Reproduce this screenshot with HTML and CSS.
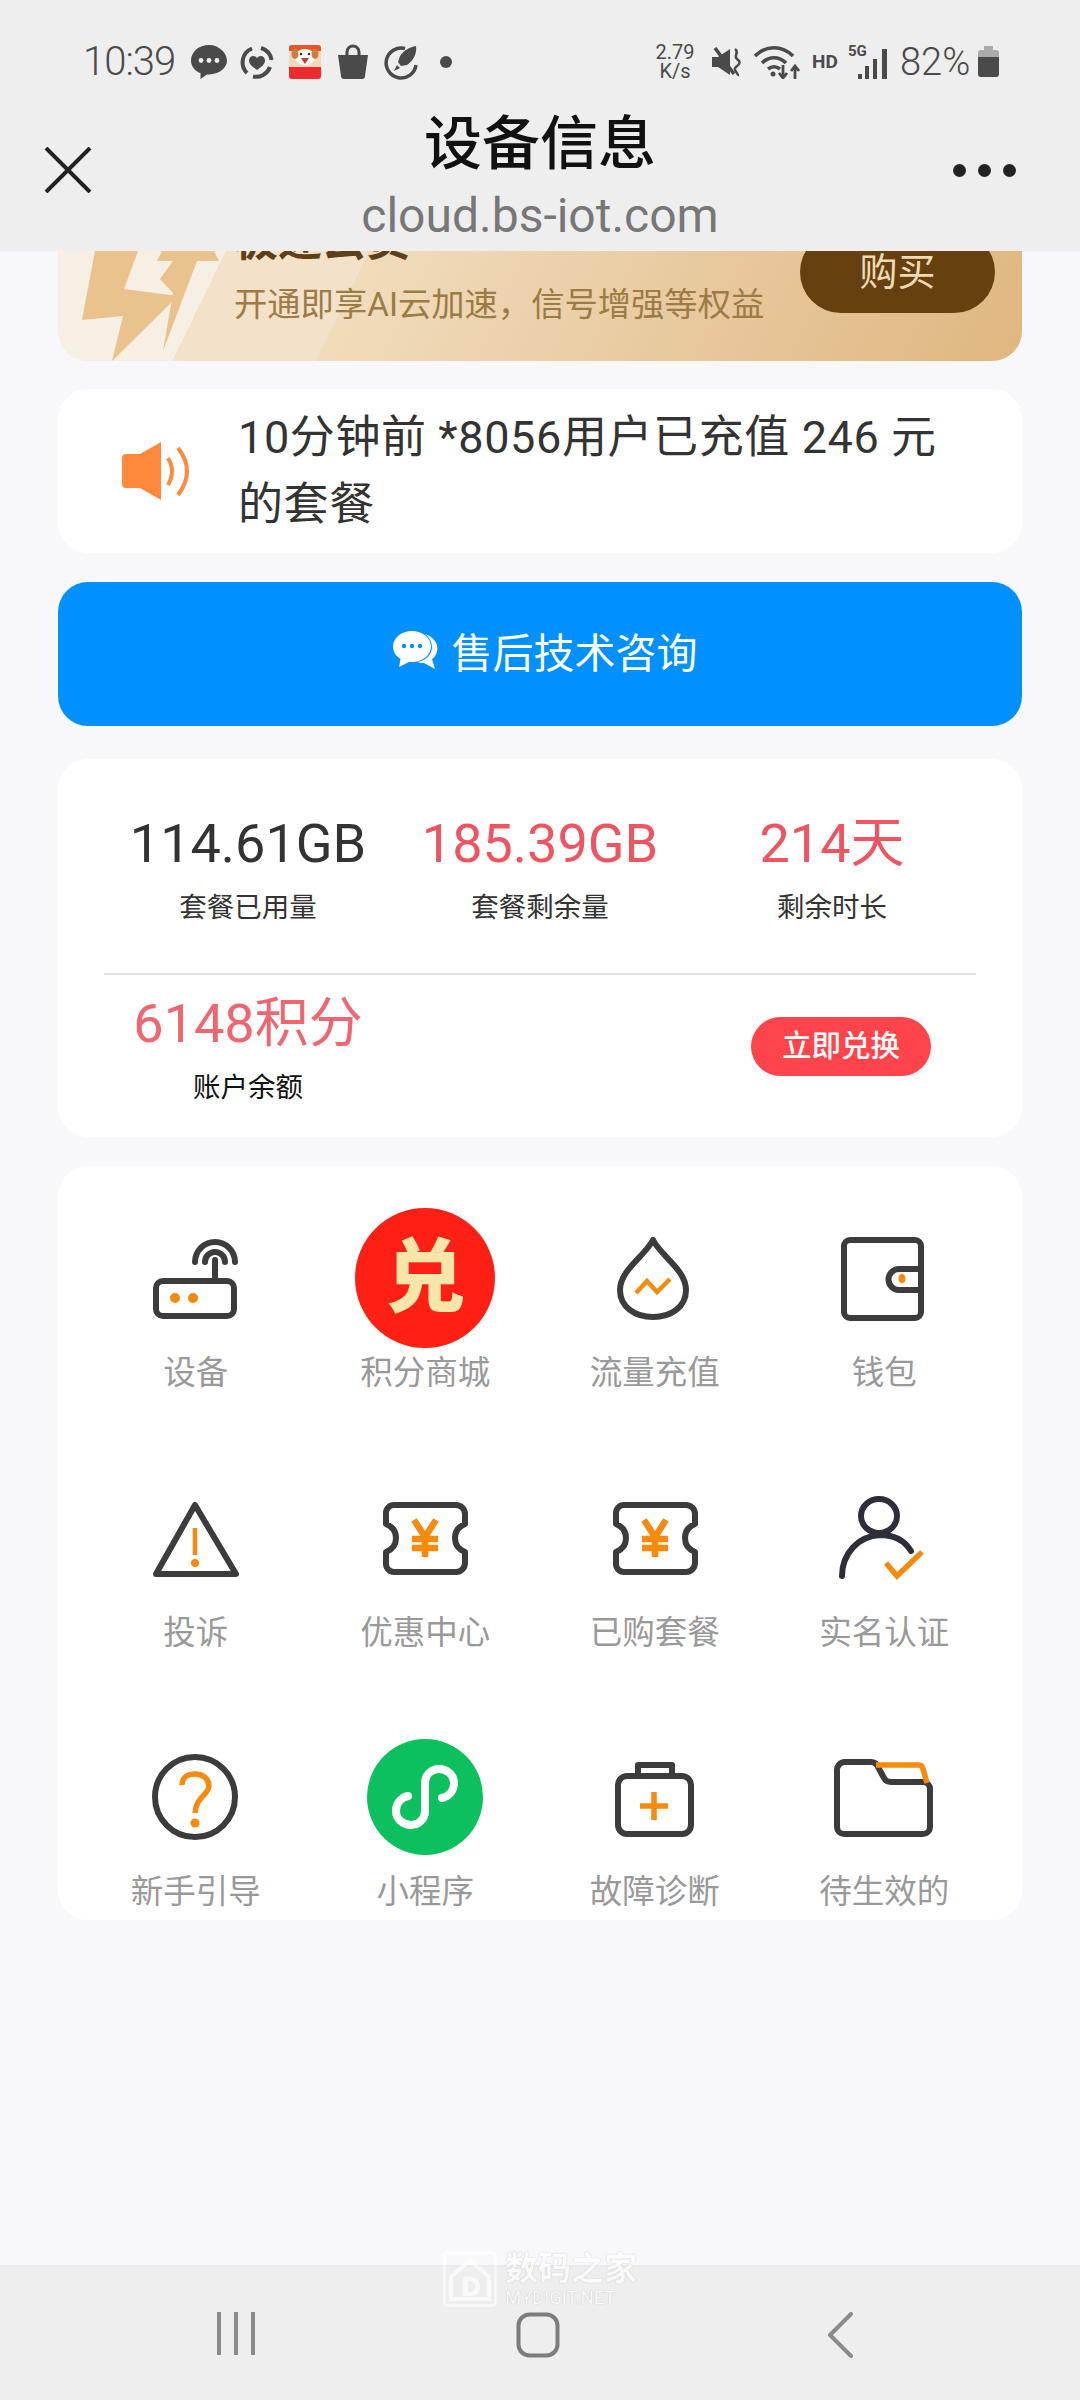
FILE: index.html
```html
<!DOCTYPE html>
<html lang="zh-CN">
<head>
    <meta charset="UTF-8">
    <meta name="viewport" content="width=device-width, initial-scale=1.0">
    <title>设备信息</title>
    <link rel="stylesheet" href="styles.css">
</head>
<body>
<div class="page">
    <header class="top">
        <div class="status">
            <div class="status-left">
                <span class="time">10:39</span>
                <svg class="st-icon" viewBox="0 0 34 34"><path fill="#4a4a4a" d="M17 0C7 0-1 6.800-1 15.500c0 5.600 3.700 10.400 9.500 12.800V34l6.500-4.600h2c10 0 18-6.400 18-13.900S27 0 17 0z"/><circle cx="9" cy="15.500" r="2.400" fill="#eee"/><circle cx="17" cy="15.500" r="2.400" fill="#eee"/><circle cx="25" cy="15.500" r="2.400" fill="#eee"/></svg>
                <svg class="st-icon" viewBox="0 0 34 34"><path fill="none" stroke="#4a4a4a" stroke-width="4" d="M12 3.500A15 15 0 0 0 7 28M13 31.500A15 15 0 0 0 30 22M31.500 15A15 15 0 0 0 21 3"/><path fill="#4a4a4a" d="M17 25c-4-3-8-5.500-8-9.500 0-2.500 2-4.500 4.300-4.500 1.500 0 2.900.8 3.700 2.200.8-1.400 2.200-2.200 3.700-2.200 2.300 0 4.300 2 4.300 4.500 0 4-4 6.500-8 9.500z"/></svg>
                <svg class="st-icon" viewBox="0 0 34 34"><rect x="1" width="32" height="34" rx="3" fill="#f0d9b8"/><path d="M1 3a3 3 0 0 1 3-3h26a3 3 0 0 1 3 3v3H1z" fill="#e8552c"/><path d="M1 22h32v9a3 3 0 0 1-3 3H4a3 3 0 0 1-3-3z" fill="#ee2a2e"/><ellipse cx="17" cy="12" rx="10" ry="8" fill="#fff"/><ellipse cx="7" cy="9" rx="3.500" ry="5" fill="#c9803c"/><ellipse cx="27" cy="9" rx="3.500" ry="5" fill="#c9803c"/><path d="M13 13h8l-4 6z" fill="#c6393a"/><circle cx="13" cy="9" r="1.300" fill="#333"/><circle cx="21" cy="9" r="1.300" fill="#333"/></svg>
                <svg class="st-icon" viewBox="0 0 34 34"><path fill="none" stroke="#4a4a4a" stroke-width="3" d="M11 10V7a6 6 0 0 1 12 0v3"/><path fill="#4a4a4a" d="M2 10h30l-3 21a3 3 0 0 1-3 3H8a3 3 0 0 1-3-3z"/></svg>
                <svg class="st-icon" viewBox="0 0 34 34"><path fill="none" stroke="#4a4a4a" stroke-width="3.500" d="M21 3.500A15 15 0 1 0 32 20"/><path fill="#4a4a4a" d="M32 1c1 7-2 14-9 19l-6 1-3-4 2-6C20 5 26 2 32 1zM13 20l3 3-6 3z"/></svg>
                <span class="st-dot"></span>
            </div>
            <div class="status-right">
                <span class="speed">2.79<br>K/s</span>
                <svg class="mute" viewBox="0 0 30 30"><path fill="#4a4a4a" d="M0 10h6l12-8v26l-12-8H0z"/><path stroke="#4a4a4a" stroke-width="3.500" d="M3 1l19 26"/><path fill="none" stroke="#4a4a4a" stroke-width="2.500" d="M23 2c5 3-2 7 2 10s3 5-1 8 3 6 2 9"/></svg>
                <svg class="wifi" viewBox="0 0 46 34"><path fill="none" stroke="#4a4a4a" stroke-width="3.500" d="M1 11c11-11 27-11 38 0M8 18c7-7 17-7 24 0M14 24c4-3 8-3 12 0"/><circle cx="19" cy="29" r="2.500" fill="#4a4a4a"/><path fill="none" stroke="#4a4a4a" stroke-width="2.800" d="M29 20v13M25 28l4 5 4-5M41 34V22M37 26l4-5 4 5"/></svg>
                <span class="hd">HD</span>
                <div class="signal">
                    <span class="five-g">5G</span>
                    <svg class="bars" viewBox="0 0 30 30"><rect x="0" y="25" width="4" height="5" fill="#4a4a4a"/><rect x="7" y="17" width="4" height="13" fill="#4a4a4a"/><rect x="15" y="10" width="4" height="20" fill="#4a4a4a"/><rect x="24" y="0" width="5" height="30" fill="#4a4a4a"/></svg>
                </div>
                <span class="batt-text">82%</span>
                <svg class="batt" viewBox="0 0 21 31"><path fill="#ababab" d="M6 0h9v4h3a3 3 0 0 1 3 3v5H0V7a3 3 0 0 1 3-3h3z"/><path fill="#4a4a4a" d="M0 11h21v17a3 3 0 0 1-3 3H3a3 3 0 0 1-3-3z"/></svg>
            </div>
        </div>
        <div class="bar">
            <svg class="close" viewBox="0 0 48 46"><path fill="none" stroke="#222" stroke-width="4" d="M2 1l44 44M46 1L2 45"/></svg>
            <div class="titles">
                <div class="title">设备信息</div>
                <div class="url">cloud.bs-iot.com</div>
            </div>
            <div class="more"><i></i><i></i><i></i></div>
        </div>
    </header>

    <main class="content">
        <section class="banner">
            <svg class="bolt" viewBox="0 0 170 110"><path fill="#e9c28d" d="M37 0h43L66 38l54 7-66 65 11-45-41 4z"/><path fill="#e9c28d" d="M104 0h52l5 10h-22l-34 90 10-58-13-14 13-18h-16z"/></svg>
            <div class="banner-text">
                <div class="banner-name">极速云贡</div>
                <div class="banner-desc">开通即享AI云加速，信号增强等权益</div>
            </div>
            <div class="buy">购买</div>
        </section>

        <section class="notice">
            <svg class="horn" viewBox="0 0 70 58"><path fill="#ff8a3d" d="M4 12h14L39 0v58L18 46H4q-4 0-4-4V16q0-4 4-4z"/><path fill="none" stroke="#ff8a3d" stroke-width="4" d="M46 16q8 13 0 27M56 6q18 23 0 47"/></svg>
            <p class="notice-text">10分钟前 *8056用户已充值 246 元 的套餐</p>
        </section>

        <a class="support">
            <svg class="support-icon" viewBox="0 0 46 38"><path fill="#fff" d="M32 3c9 3 14 10 12 18-1 3-3 6-5 7l3 10-11-6c-2 0-5 0-7-1 8-1 15-7 15-15 0-5-3-10-7-13z"/><path fill="#fff" d="M19 0C8.500 0 0 6.800 0 15.500 0 21 3 25 7.500 27.800L6 36l10-5h3c10.500 0 19-7 19-15.500S29.500 0 19 0z"/><circle cx="11" cy="15" r="2.200" fill="#0090ff"/><circle cx="19" cy="15" r="2.200" fill="#0090ff"/><circle cx="27" cy="15" r="2.200" fill="#0090ff"/></svg>
            <span>售后技术咨询</span>
        </a>

        <section class="stats">
            <div class="stats-row">
                <div class="stat">
                    <div class="stat-num">114.61GB</div>
                    <div class="stat-label">套餐已用量</div>
                </div>
                <div class="stat">
                    <div class="stat-num red">185.39GB</div>
                    <div class="stat-label">套餐剩余量</div>
                </div>
                <div class="stat">
                    <div class="stat-num red">214天</div>
                    <div class="stat-label">剩余时长</div>
                </div>
            </div>
            <div class="stats-line"></div>
            <div class="points">
                <div class="stat">
                    <div class="stat-num points-num">6148积分</div>
                    <div class="stat-label dark">账户余额</div>
                </div>
                <div class="exchange">立即兑换</div>
            </div>
        </section>

        <section class="menu">
            <div class="menu-item">
                <div class="menu-icon">
                    <svg class="ico" viewBox="0 0 100 100"><g class="line"><rect x="10" y="53" width="78" height="35" rx="7"/><path d="M69 53V32M49 34a20 20 0 0 1 40 0M59 34a10 10 0 0 1 20 0"/></g><circle class="dot" cx="29" cy="70" r="5"/><circle class="dot" cx="47" cy="70" r="5"/></svg>
                </div>
                <span class="menu-label">设备</span>
            </div>
            <div class="menu-item">
                <div class="menu-icon"><div class="exchange-badge">兑</div></div>
                <span class="menu-label">积分商城</span>
            </div>
            <div class="menu-item">
                <div class="menu-icon">
                    <svg class="ico" viewBox="0 0 100 100"><path class="line" d="M48 12C56 28 81 42 81 62 81 79 66 89 48 89 30 89 15 79 15 62 15 42 40 28 48 12z"/><path class="accent thin" d="M31 65l11-12 10 11 13-13"/></svg>
                </div>
                <span class="menu-label">流量充值</span>
            </div>
            <div class="menu-item">
                <div class="menu-icon">
                    <svg class="ico" viewBox="0 0 100 100"><g class="line"><rect x="10" y="12" width="77" height="78" rx="6"/><path d="M87 41H65a10.500 10.500 0 0 0 0 21h22"/></g><ellipse class="dot" cx="68" cy="50.500" rx="3.500" ry="4.500"/></svg>
                </div>
                <span class="menu-label">钱包</span>
            </div>

            <div class="menu-item">
                <div class="menu-icon">
                    <svg class="ico" viewBox="0 0 100 100"><path class="line" d="M49 17L90 86H10z"/><path class="accent thin" d="M49 40v27"/><circle class="dot" cx="49" cy="75" r="4"/></svg>
                </div>
                <span class="menu-label">投诉</span>
            </div>
            <div class="menu-item">
                <div class="menu-icon">
                    <svg class="ico" viewBox="0 0 100 100"><path class="line" d="M19 17h62a9 9 0 0 1 9 9v10q-10 4-10 14t10 14v11a9 9 0 0 1-9 9H19a8 8 0 0 1-8-8V64q10-4 10-14T11 36V25a8 8 0 0 1 8-8z"/><path class="accent yen" d="M39 32l11 17 11-17M50 49v20M37 51h26M37 60h26"/></svg>
                </div>
                <span class="menu-label">优惠中心</span>
            </div>
            <div class="menu-item">
                <div class="menu-icon">
                    <svg class="ico" viewBox="0 0 100 100"><path class="line" d="M19 17h62a9 9 0 0 1 9 9v10q-10 4-10 14t10 14v11a9 9 0 0 1-9 9H19a8 8 0 0 1-8-8V64q10-4 10-14T11 36V25a8 8 0 0 1 8-8z"/><path class="accent yen" d="M39 32l11 17 11-17M50 49v20M37 51h26M37 60h26"/></svg>
                </div>
                <span class="menu-label">已购套餐</span>
            </div>
            <div class="menu-item">
                <div class="menu-icon">
                    <svg class="ico" viewBox="0 0 100 100"><g class="line navy"><ellipse cx="45" cy="28" rx="18" ry="17"/><path d="M8 88C8 66 24 48 46 47c14 0 25 6 31 16"/></g><path class="accent" d="M52 75l11 13 25-24"/></svg>
                </div>
                <span class="menu-label">实名认证</span>
            </div>

            <div class="menu-item">
                <div class="menu-icon">
                    <svg class="ico" viewBox="0 0 100 100"><circle class="line" cx="49" cy="50" r="40"/><path class="accent" d="M36 38c0-8 6-11 13-11 8 0 14 5 14 12 0 8-13 11-14 27"/><circle class="dot" cx="49" cy="76" r="4.500"/></svg>
                </div>
                <span class="menu-label">新手引导</span>
            </div>
            <div class="menu-item">
                <div class="menu-icon">
                    <svg class="mini" viewBox="0 0 116 116"><circle cx="58" cy="58" r="58" fill="#0cbf5f"/><path fill="none" stroke="#fff" stroke-width="8" stroke-linecap="round" d="M41 57c-8 2-12 8-12 15 0 8 7 14 15 14s14-6 14-14V44c0-8 6-14 14-14s15 6 15 14c0 7-4 13-12 15"/></svg>
                </div>
                <span class="menu-label">小程序</span>
            </div>
            <div class="menu-item">
                <div class="menu-icon">
                    <svg class="ico" viewBox="0 0 100 100"><g class="line"><rect x="13" y="29" width="73" height="58" rx="9"/><path d="M33 29V18h34v11"/></g><path class="accent" d="M35 59h28M49 45v28"/></svg>
                </div>
                <span class="menu-label">故障诊断</span>
            </div>
            <div class="menu-item">
                <div class="menu-icon">
                    <svg class="ico" viewBox="0 0 100 100"><path class="line" d="M3 24a8 8 0 0 1 8-9h26q5 0 7 5l6 11q2 4 7 4h33a7 7 0 0 1 6 7v38a7 7 0 0 1-7 7H10a7 7 0 0 1-7-7z"/><path class="accent" d="M42 18h43q3 0 4 4l4 14"/></svg>
                </div>
                <span class="menu-label">待生效的</span>
            </div>
        </section>
    </main>

    <footer class="nav">
        <svg class="nav-bars" viewBox="0 0 40 44"><path fill="none" stroke="#8a8a8a" stroke-width="4" d="M3 0v43M20 0v43M37 0v43"/></svg>
        <svg class="nav-home" viewBox="0 0 44 46"><rect x="2.500" y="2.500" width="39" height="41" rx="11" fill="none" stroke="#7c7c7c" stroke-width="4"/></svg>
        <svg class="nav-back" viewBox="0 0 26 46"><path fill="none" stroke="#8a8a8a" stroke-width="4" stroke-linecap="round" stroke-linejoin="round" d="M24 2L3 23l21 21"/></svg>
    </footer>

    <div class="watermark">
        <svg class="wm-logo" viewBox="0 0 54 56"><rect x="1.500" y="1.500" width="51" height="53" rx="3" fill="none" stroke="#fff" stroke-width="2.500"/><path fill="none" stroke="#fff" stroke-width="4" d="M8 26L27 9l19 17v22H8z"/><path fill="#fff" d="M20 26h7c7 0 10 4 10 10s-3 9-10 9h-7zm5 4v11h2c4 0 5-2 5-5s-1-6-5-6z"/></svg>
        <div class="wm-text">
            <div class="wm-name">数码之家</div>
            <div class="wm-site">MYDIGIT.NET</div>
        </div>
    </div>
</div>
</body>
</html>
```

FILE: styles.css
```css
* {
    box-sizing: border-box;
}
body {
    margin: 0;
    font-family: Roboto, "Noto Sans CJK SC", sans-serif;
    background-color: #f8f8fc;
    color: #333;
}
.page {
    position: relative;
    width: 1080px;
    height: 2400px;
    display: flex;
    flex-direction: column;
    overflow: hidden;
}

/* top bar */
.top {
    position: relative;
    z-index: 1;
    height: 251px;
    background-color: #eeeeee;
    padding-top: 44px;
    flex-shrink: 0;
}
.status {
    display: flex;
    justify-content: space-between;
    align-items: center;
    height: 35px;
    padding: 0 81px 0 83px;
    color: #4a4a4a;
}
.status-left, .status-right {
    display: flex;
    align-items: center;
}
.status-left {
    gap: 14px;
}
.status-right {
    gap: 12px;
}
.time {
    font-size: 40px;
    font-weight: 300;
    letter-spacing: -1px;
    width: 95px;
}
.st-icon {
    width: 34px;
    height: 34px;
    overflow: visible;
}
.st-dot {
    width: 12px;
    height: 12px;
    margin-left: 8px;
    border-radius: 50%;
    background-color: #4a4a4a;
}
.speed {
    width: 42px;
    margin-right: 4px;
    font-size: 20px;
    line-height: 19px;
    text-align: center;
}
.mute {
    width: 30px;
    height: 30px;
}
.wifi {
    width: 46px;
    height: 34px;
}
.hd {
    width: 24px;
    font-size: 19px;
    font-weight: 700;
}
.signal {
    position: relative;
    width: 40px;
    height: 34px;
}
.five-g {
    position: absolute;
    left: 0;
    top: -1px;
    font-size: 15px;
    font-weight: 700;
    line-height: 15px;
}
.bars {
    position: absolute;
    right: 0;
    bottom: 0;
    width: 30px;
    height: 30px;
}
.batt-text {
    width: 70px;
    font-size: 38px;
    font-weight: 300;
}
.batt {
    width: 21px;
    height: 31px;
    margin-left: -4px;
}
.bar {
    display: grid;
    grid-template-columns: 1fr auto 1fr;
    align-items: center;
    margin-top: 11px;
    padding: 0 64px;
}
.close {
    width: 48px;
    height: 46px;
    margin-left: -20px;
}
.titles {
    text-align: center;
}
.title {
    font-size: 58px;
    font-weight: 500;
    line-height: 80px;
    color: #111;
    margin-top: 14px;
}
.url {
    font-size: 48px;
    line-height: 50px;
    color: #777;
    margin: 7px 0 9px;
}
.more {
    display: flex;
    justify-content: flex-end;
    gap: 12px;
}
.more i {
    width: 13px;
    height: 13px;
    border-radius: 50%;
    background-color: #222;
}

/* page body */
.content {
    padding: 0 58px;
    display: flex;
    flex-direction: column;
}
.banner {
    position: relative;
    height: 110px;
    display: flex;
    padding: 0 27px 0 176px;
    border-radius: 0 0 30px 30px;
    background: linear-gradient(116deg, #f6efe3 0 16.500%, #f3e2c9 16.500% 30.600%, #f0dcbc 30.600%, #e0b680 100%);
}
.bolt {
    position: absolute;
    left: 0;
    top: 0;
    width: 170px;
    height: 110px;
}
.banner-text {
    position: relative;
    flex: 1;
}
.banner-name {
    margin-top: -31px;
    font-size: 44px;
    font-weight: 700;
    line-height: 42px;
    color: #5d4017;
}
.banner-desc {
    margin-top: 21px;
    font-size: 33.300px;
    line-height: 44px;
    color: #9c7b45;
    white-space: nowrap;
}
.buy {
    position: relative;
    width: 195px;
    height: 82px;
    margin-top: -20px;
    border-radius: 41px;
    background-color: #66410f;
    color: #f0d9b5;
    font-size: 38px;
    line-height: 82px;
    text-align: center;
}
.notice {
    display: flex;
    align-items: center;
    height: 164px;
    margin-top: 28px;
    padding-left: 64px;
    background-color: #fff;
    border-radius: 30px;
}
.horn {
    width: 70px;
    height: 58px;
    flex-shrink: 0;
}
.notice-text {
    width: 710px;
    margin: 0 0 0 46px;
    font-size: 45px;
    line-height: 67px;
    letter-spacing: .6px;
}
.support {
    display: flex;
    align-items: center;
    justify-content: center;
    gap: 13px;
    height: 144px;
    margin-top: 29px;
    padding: 0 0 8px 10px;
    background-color: #0090ff;
    border-radius: 30px;
    color: #fff;
    font-size: 41px;
}
.support-icon {
    width: 46px;
    height: 38px;
}
.stats {
    height: 378px;
    margin-top: 33px;
    padding: 50px 44px 0;
    background-color: #fff;
    border-radius: 30px;
}
.stats-row {
    display: flex;
    height: 164px;
}
.stat {
    width: 292px;
    text-align: center;
}
.stat-num {
    font-size: 54px;
    line-height: 70px;
}
.stat-num.red {
    color: #ee5560;
}
.points-num {
    color: #ef6670;
}
.stat-label {
    margin-top: 9px;
    font-size: 27.500px;
    line-height: 40px;
}
.stat-label.dark {
    color: #111;
}
.stats-line {
    height: 2px;
    margin: 0 2px;
    background-color: #e2e2e2;
}
.points {
    display: flex;
    justify-content: space-between;
    padding-top: 14px;
}
.exchange {
    width: 180px;
    height: 59px;
    margin: 28px 47px 0 0;
    border-radius: 30px;
    background-color: #ff444c;
    color: #fff;
    font-size: 29.500px;
    font-weight: 500;
    line-height: 59px;
    text-align: center;
}

/* menu grid */
.menu {
    display: grid;
    grid-template-columns: repeat(4, 229.500px);
    grid-auto-rows: 259.500px;
    justify-content: center;
    height: 754px;
    margin-top: 29px;
    padding-top: 42px;
    background-color: #fff;
    border-radius: 30px;
    overflow: hidden;
}
.menu-item {
    display: flex;
    flex-direction: column;
    align-items: center;
}
.menu-icon {
    display: flex;
    align-items: center;
    justify-content: center;
    height: 140px;
}
.menu-label {
    font-size: 32.500px;
    line-height: 50px;
    color: #999;
}
.ico {
    width: 100px;
    height: 100px;
    overflow: visible;
}
.line, .line * {
    fill: none;
    stroke: #3c3c3c;
    stroke-width: 6;
    stroke-linejoin: round;
    stroke-linecap: round;
}
.line.navy, .line.navy * {
    stroke: #2c2e3a;
}
.accent {
    fill: none;
    stroke: #f88a0d;
    stroke-width: 5.500;
}
.accent.thin {
    stroke-width: 4.500;
}
.accent.yen {
    stroke-width: 6.500;
}
.dot {
    fill: #f88a0d;
}
.exchange-badge {
    width: 140px;
    height: 140px;
    border-radius: 50%;
    background-color: #ff2015;
    color: #f9e5a8;
    font-size: 80px;
    font-weight: 900;
    line-height: 140px;
    text-align: center;
}
.mini {
    width: 116px;
    height: 116px;
}

/* bottom nav */
.nav {
    display: flex;
    justify-content: space-between;
    align-items: flex-start;
    height: 135px;
    margin-top: auto;
    padding: 45px 227px 0 216px;
    background-color: #eeeeee;
    border-top: 2px solid #e9e9ee;
}
.nav-bars {
    width: 40px;
    height: 44px;
}
.nav-home {
    width: 44px;
    height: 46px;
    margin-right: 7px;
}
.nav-back {
    width: 26px;
    height: 46px;
}
.watermark {
    position: absolute;
    left: 442px;
    top: 2251px;
    display: flex;
    gap: 7px;
    color: #fff;
    opacity: .7;
    text-shadow: 0 0 1px rgba(0, 0, 0, .35);
}
.wm-logo {
    width: 56px;
    height: 56px;
}
.wm-name {
    font-size: 33px;
    font-weight: 700;
    line-height: 36px;
}
.wm-site {
    margin-top: 2px;
    font-size: 18.500px;
    line-height: 18px;
}
```
